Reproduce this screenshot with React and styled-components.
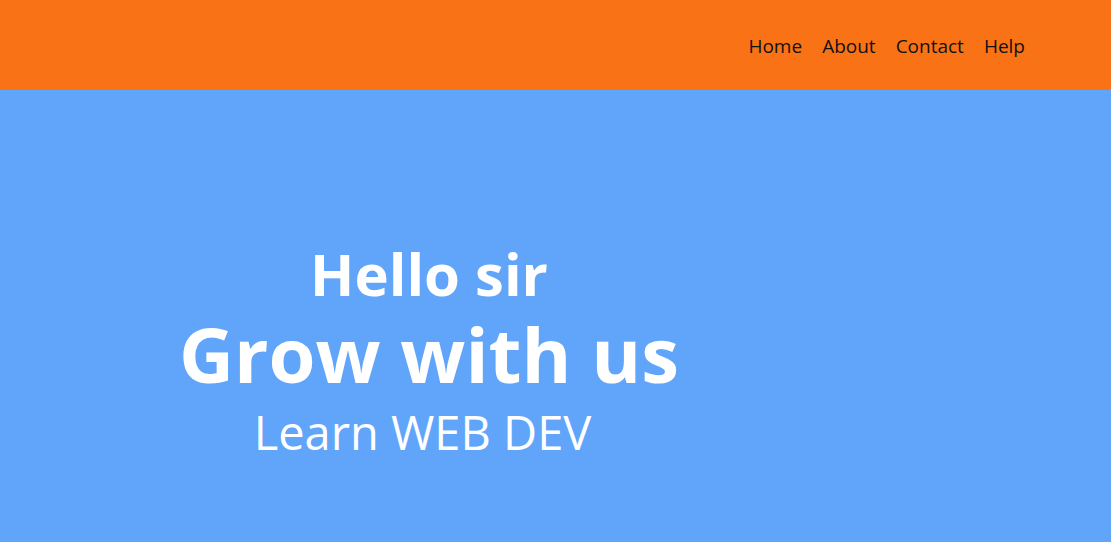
import React from "react";
import styled, { createGlobalStyle } from "styled-components";

const Global = createGlobalStyle`
  html, body { margin: 0; padding: 0; }
  body { font-family: "Open Sans", "Noto Sans", sans-serif; background: #60a5fa; }
`;

const Header = styled.header`
  height: 90px;
  background: #f97316;
  display: flex;
  align-items: center;
  justify-content: flex-end;
  padding-right: 86px;
`;

const Nav = styled.ul`
  display: flex;
  gap: 20px;
  list-style: none;
  margin: 0;
  padding: 2px 0 0;
`;

const NavItem = styled.li`
  font-size: 19px;
  color: #111;
`;

const Hero = styled.main`
  height: 452px;
  background: #60a5fa;
  display: flex;
`;

const Column = styled.section`
  width: 858px;
  display: flex;
  flex-direction: column;
  align-items: center;
  padding-top: 149px;
  color: #fff;
`;

const Title = styled.h1`
  margin: 0;
  padding-right: ${(p) => p.$shift || 0}px;
  font-size: ${(p) => p.$size}px;
  font-weight: ${(p) => p.$weight};
  line-height: ${(p) => p.$lh}px;
`;

export default function App() {
  return (
    <>
      <Global />
      <Header>
        <Nav>
          <NavItem>Home</NavItem>
          <NavItem>About</NavItem>
          <NavItem>Contact</NavItem>
          <NavItem>Help</NavItem>
        </Nav>
      </Header>
      <Hero>
        <Column>
          <Title $size={58} $weight={700} $lh={70}>Hello sir</Title>
          <Title $size={76} $weight={700} $lh={90}>Grow with us</Title>
          <Title $size={47} $weight={400} $lh={66} $shift={13}>Learn WEB DEV</Title>
        </Column>
      </Hero>
    </>
  );
}
